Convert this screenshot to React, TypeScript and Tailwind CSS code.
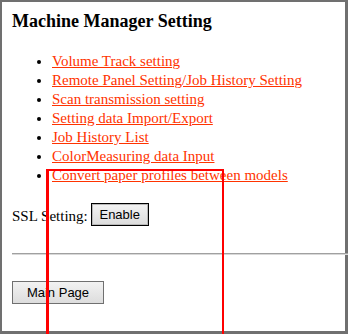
import React from "react";

const links = [
  "Volume Track setting",
  "Remote Panel Setting/Job History Setting",
  "Scan transmission setting",
  "Setting data Import/Export",
  "Job History List",
  "ColorMeasuring data Input",
  "Convert paper profiles between models",
];

export default function App() {
  return (
    <div className="relative w-[348px] h-[334px] overflow-hidden bg-white">
      <div
        className="w-full h-full border-l-2 border-t-2 border-r-[3px] border-b-[3px] border-[#707070] pl-[10px] pt-[9px]"
        style={{ fontFamily: '"Liberation Serif", "Times New Roman", serif' }}
      >
        <h3 className="text-[18px] leading-[21px] font-bold text-black m-0">
          Machine Manager Setting
        </h3>
        <ul className="list-disc mt-[20px] pl-[40px] text-[15px] leading-[19px]">
          {links.map((l) => (
            <li key={l}>
              <a href="#" className="text-[#ff3300] underline">
                {l}
              </a>
            </li>
          ))}
        </ul>
        <div className="flex items-end mt-[18px] text-[15px] leading-[19px] text-black">
          <span>SSL Setting:</span>
          <button
            className="ml-[3px] w-[58px] h-[23px] border border-black bg-gradient-to-b from-[#f3f3f3] to-[#dcdcdc] text-[13px] text-black shadow-[inset_0_0_0_1px_#b8b8b8]"
            style={{ fontFamily: '"Liberation Sans", Arial, sans-serif' }}
          >
            Enable
          </button>
        </div>
        <div className="mt-[27px] h-[2px] -mr-[3px] bg-[#a0a0a0] border-b border-[#d8d8d8]" />
        <button
          className="mt-[26px] w-[92px] h-[23px] border border-[#707070] bg-gradient-to-b from-[#f2f2f2] to-[#dddddd] text-[13px] text-black"
          style={{ fontFamily: '"Liberation Sans", Arial, sans-serif' }}
        >
          Main Page
        </button>
      </div>
      <div className="absolute left-[46px] top-[169px] w-[178px] h-[200px] border-2 border-l-[3px] border-[#ff0000] pointer-events-none" />
    </div>
  );
}
